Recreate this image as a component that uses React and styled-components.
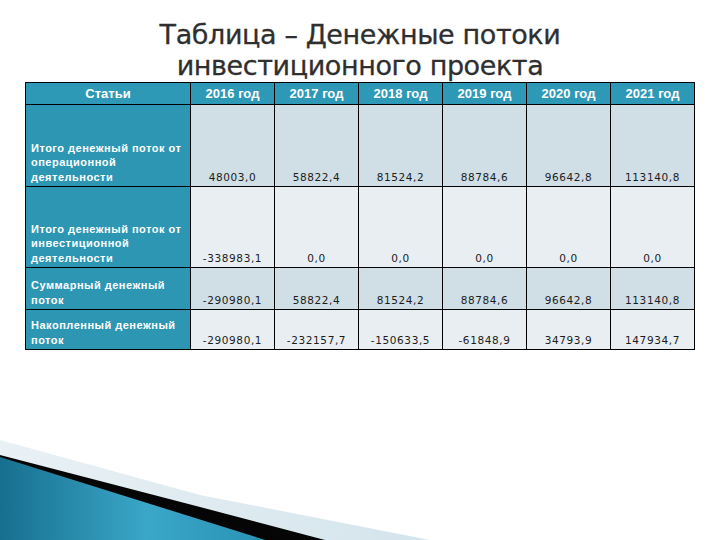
import styled, { createGlobalStyle } from "styled-components";

const Global = createGlobalStyle`
  html, body {
    margin: 0;
    padding: 0;
    background: #fff;
  }
`;

const Slide = styled.div`
  width: 720px;
  height: 540px;
  display: flex;
  flex-direction: column;
  align-items: center;
  overflow: hidden;
  font-family: "DejaVu Sans", Verdana, sans-serif;
`;

const Title = styled.h1`
  margin: 19px 0 0 0;
  font-size: 27px;
  line-height: 31px;
  font-weight: normal;
  color: #2f2f2f;
  text-align: center;
  letter-spacing: -0.4px;
  -webkit-text-stroke: 0.3px #2f2f2f;
`;

const Table = styled.table`
  width: 670px;
  margin-top: 1px;
  border-collapse: collapse;
  table-layout: fixed;
  border: 1px solid #000;

  td,
  th {
    border: 1px solid #000;
    padding: 0;
  }
`;

const HeadRow = styled.tr`
  height: 22px;
  background: #2e99b6;
`;

const HeadCell = styled.th`
  color: #fff;
  font-family: "Liberation Sans", Arial, sans-serif;
  font-size: 13px;
  font-weight: bold;
  text-align: center;
  vertical-align: middle;
  width: ${(p) => p.$w || 83}px;
`;

const Row = styled.tr`
  height: ${(p) => p.$h}px;
  background: ${(p) => (p.$dark ? "#d0dee6" : "#e8eef1")};
`;

const LabelCell = styled.td`
  background: #2c96b3;
  color: #fff;
  font-family: "Liberation Sans", Arial, sans-serif;
  font-size: 11px;
  font-weight: bold;
  letter-spacing: 0.5px;
  line-height: 14.5px;
  text-align: left;
  vertical-align: bottom;
  white-space: nowrap;
  padding: 0 2px 2px 5px !important;
`;

const NumCell = styled.td`
  color: #1c1c1c;
  font-size: 10.5px;
  letter-spacing: 0.6px;
  text-align: center;
  vertical-align: bottom;
  padding-bottom: 3px !important;
`;

const Footer = styled.svg`
  margin-top: auto;
  align-self: flex-start;
  display: block;
`;

const years = ["2016", "2017", "2018", "2019", "2020", "2021"];

const rows = [
  {
    label: ["Итого денежный поток от", "операционной", "деятельности"],
    h: 82,
    dark: true,
    values: ["48003,0", "58822,4", "81524,2", "88784,6", "96642,8", "113140,8"],
  },
  {
    label: ["Итого денежный поток от", "инвестиционной", "деятельности"],
    h: 81,
    dark: false,
    values: ["-338983,1", "0,0", "0,0", "0,0", "0,0", "0,0"],
  },
  {
    label: ["Суммарный денежный", "поток"],
    h: 42,
    dark: true,
    values: ["-290980,1", "58822,4", "81524,2", "88784,6", "96642,8", "113140,8"],
  },
  {
    label: ["Накопленный денежный", "поток"],
    h: 40,
    dark: false,
    values: ["-290980,1", "-232157,7", "-150633,5", "-61848,9", "34793,9", "147934,7"],
  },
];

function Swoosh() {
  return (
    <Footer width="720" height="100" viewBox="0 440 720 100">
      <defs>
        <linearGradient id="teal" x1="0" y1="0" x2="1" y2="0">
          <stop offset="0" stopColor="#176f8e" />
          <stop offset="0.55" stopColor="#3aa6c8" />
          <stop offset="1" stopColor="#2a93b6" />
        </linearGradient>
        <linearGradient id="pale" x1="0" y1="0" x2="1" y2="0">
          <stop offset="0" stopColor="#e9f1f5" />
          <stop offset="1" stopColor="#d4e4ec" />
        </linearGradient>
      </defs>
      <path d="M0 440 L200 495 L430 540 L0 540 Z" fill="url(#pale)" />
      <path d="M0 455 L200 507 L325 540 L0 540 Z" fill="#050505" />
      <path d="M0 457 L240 532 L265 540 L0 540 Z" fill="url(#teal)" />
    </Footer>
  );
}

export default function App() {
  return (
    <Slide>
      <Global />
      <Title>
        Таблица – Денежные потоки
        <br />
        инвестиционного проекта
      </Title>
      <Table>
        <thead>
          <HeadRow>
            <HeadCell $w={164}>Статьи</HeadCell>
            {years.map((y) => (
              <HeadCell key={y}>{y} год</HeadCell>
            ))}
          </HeadRow>
        </thead>
        <tbody>
          {rows.map((r, i) => (
            <Row key={i} $h={r.h} $dark={r.dark}>
              <LabelCell>
                {r.label.map((l, j) => (
                  <div key={j}>{l}</div>
                ))}
              </LabelCell>
              {r.values.map((v, j) => (
                <NumCell key={j}>{v}</NumCell>
              ))}
            </Row>
          ))}
        </tbody>
      </Table>
      <Swoosh />
    </Slide>
  );
}
